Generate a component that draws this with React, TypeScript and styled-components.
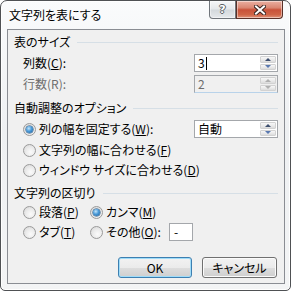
import React from "react";
import styled, { createGlobalStyle } from "styled-components";

const GlobalStyle = createGlobalStyle`
  html, body {
    margin: 0;
    padding: 0;
    background: #ffffff;
  }
  body {
    font-family: "Noto Sans CJK JP", "Noto Sans", sans-serif;
    font-size: 12px;
    color: #000;
  }
`;

const Window = styled.div`
  box-sizing: border-box;
  width: 291px;
  height: 291px;
  border: 1px solid #4f5154;
  border-radius: 7px 7px 5px 5px;
  background: linear-gradient(180deg, #fafbfc 0%, #eef0f2 45%, #f3f4f5 100%);
  box-shadow: inset 0 0 0 1px rgba(255, 255, 255, 0.9);
  display: flex;
  flex-direction: column;
  overflow: hidden;
`;

const TitleBar = styled.div`
  height: 28px;
  display: flex;
  align-items: flex-start;
  padding: 0 7px 0 8px;
`;

const Title = styled.div`
  flex: 1;
  margin-top: 6px;
  line-height: 16px;
  font-feature-settings: "palt";
  text-shadow: 0 0 5px #fff, 0 0 8px #fff;
`;

const CaptionButtons = styled.div`
  display: flex;
`;

const CaptionButton = styled.div<{ $kind: "help" | "close" }>`
  box-sizing: border-box;
  height: 18px;
  width: ${({ $kind }) => ($kind === "help" ? "27px" : "47px")};
  display: flex;
  align-items: center;
  justify-content: center;
  border: 1px solid ${({ $kind }) => ($kind === "help" ? "#70757b" : "#5a3129")};
  border-top: none;
  border-radius: ${({ $kind }) => ($kind === "help" ? "0 0 0 4px" : "0 0 4px 0")};
  background: ${({ $kind }) =>
    $kind === "help"
      ? "linear-gradient(180deg, #f6f7f8 0%, #e4e7ea 48%, #d3d8dc 52%, #e6e9ec 100%)"
      : "linear-gradient(180deg, #eab0a2 0%, #d98672 40%, #c9523a 52%, #cf6446 80%, #e0937a 100%)"};
  box-shadow: inset 0 0 0 1px rgba(255, 255, 255, 0.45);
`;

const HelpGlyph = styled.span`
  font-family: "DejaVu Sans", sans-serif;
  font-weight: bold;
  font-size: 11px;
  line-height: 11px;
  color: #ffffff;
  text-shadow: 1px 0 0 #5b5f64, -1px 0 0 #5b5f64, 0 1px 0 #5b5f64, 0 -1px 0 #5b5f64;
`;

const Client = styled.div`
  box-sizing: border-box;
  height: 255px;
  margin: 0 5px 6px 6px;
  border: 1px solid #8a8d93;
  background: #f0f0f0;
  padding: 5px 6px 0 6px;
  display: flex;
  flex-direction: column;
`;

const Header = styled.div<{ $top: number }>`
  display: flex;
  align-items: center;
  height: 14px;
  line-height: 14px;
  margin-top: ${({ $top }) => $top}px;
`;

const HeaderText = styled.span`
  font-feature-settings: "palt";
`;

const HeaderRule = styled.span`
  flex: 1;
  height: 1px;
  margin-left: 7px;
  background: #d6dfe6;
`;

const Row = styled.div<{ $top?: number; $h?: number }>`
  display: flex;
  align-items: center;
  height: ${({ $h }) => $h ?? 20}px;
  margin-top: ${({ $top }) => $top ?? 0}px;
  padding-left: 9px;
`;

const Label = styled.span<{ $disabled?: boolean; $width?: number }>`
  font-feature-settings: "palt";
  line-height: 16px;
  white-space: nowrap;
  color: ${({ $disabled }) => ($disabled ? "#6d6d6d" : "#000")};
  width: ${({ $width }) => ($width ? `${$width}px` : "auto")};

  & u {
    text-underline-offset: 1px;
  }
`;

const RadioCircle = styled.span`
  box-sizing: border-box;
  flex: none;
  width: 13px;
  height: 13px;
  margin-right: 3px;
  border-radius: 50%;
  border: 1px solid #9a9a9a;
  background: radial-gradient(circle at 60% 65%, #fbfbfb 0%, #ececec 45%, #d4d4d4 100%);
  display: flex;
  align-items: center;
  justify-content: center;
`;

const RadioDot = styled.span`
  width: 7px;
  height: 7px;
  border-radius: 50%;
  background: radial-gradient(circle at 40% 35%, #c4e6fb 0%, #4a9ad8 45%, #1b5c96 100%);
  box-shadow: 0 0 0 0.5px #1c4c78;
`;

const RadioCell = styled.div`
  display: flex;
  align-items: center;
`;

const SpinBox = styled.div<{ $disabled?: boolean }>`
  box-sizing: border-box;
  margin-left: auto;
  width: 84px;
  height: 18px;
  display: flex;
  border: 1px solid #a4a7ab;
  border-bottom-color: ${({ $disabled }) => ($disabled ? "#b9d3ea" : "#a4a7ab")};
  background: ${({ $disabled }) => ($disabled ? "#f0f0f0" : "#ffffff")};
`;

const SpinValue = styled.div<{ $disabled?: boolean }>`
  flex: 1;
  display: flex;
  align-items: center;
  padding-left: 3px;
  line-height: 16px;
  color: ${({ $disabled }) => ($disabled ? "#6d6d6d" : "#000")};
`;

const Caret = styled.span`
  width: 1px;
  height: 13px;
  margin-left: 1px;
  background: #000;
`;

const SpinButtons = styled.div`
  width: 16px;
  display: flex;
  flex-direction: column;
  padding: 1px 1px 1px 0;
  gap: 1px;
`;

const SpinButton = styled.div`
  flex: 1;
  display: flex;
  align-items: center;
  justify-content: center;
  background: linear-gradient(180deg, #f7f7f7 0%, #ebebeb 50%, #dcdcdc 100%);
  border: 1px solid #d2d2d2;
  border-radius: 1px;
`;

const Arrow = styled.span<{ $up?: boolean; $disabled?: boolean }>`
  width: 0;
  height: 0;
  border-left: 3px solid transparent;
  border-right: 3px solid transparent;
  ${({ $up, $disabled }) =>
    $up
      ? `border-bottom: 3px solid ${$disabled ? "#b0b0b0" : "#3e4f6e"};`
      : `border-top: 3px solid ${$disabled ? "#b0b0b0" : "#5a79b0"};`}
`;

const SepGrid = styled.div`
  display: grid;
  grid-template-columns: 67px auto;
  grid-auto-rows: 20px;
  margin-top: 2px;
  padding-left: 9px;
`;

const SmallInput = styled.div`
  box-sizing: border-box;
  width: 24px;
  height: 18px;
  border: 1px solid #a4a7ab;
  background: #fff;
  padding-left: 4px;
  line-height: 15px;
`;

const ButtonRow = styled.div`
  display: flex;
  justify-content: flex-end;
  gap: 10px;
  margin-top: 15px;
  padding-right: 1px;
`;

const Button = styled.div<{ $primary?: boolean }>`
  box-sizing: border-box;
  width: ${({ $primary }) => ($primary ? "74px" : "75px")};
  height: 21px;
  display: flex;
  align-items: center;
  justify-content: center;
  font-feature-settings: "palt";
  border: 1px solid ${({ $primary }) => ($primary ? "#3c7fb1" : "#707070")};
  border-radius: 3px;
  background: linear-gradient(180deg, #f2f2f2 0%, #ebebeb 50%, #dddddd 52%, #cfcfcf 100%);
  box-shadow: inset 0 0 0 1px ${({ $primary }) => ($primary ? "#9fdcf9" : "#fbfbfb")};
`;

const Radio = ({ checked }: { checked?: boolean }) => (
  <RadioCircle>{checked && <RadioDot />}</RadioCircle>
);

const Spin = ({ value, disabled, caret }: { value: string; disabled?: boolean; caret?: boolean }) => (
  <SpinBox $disabled={disabled}>
    <SpinValue $disabled={disabled}>
      {value}
      {caret && <Caret />}
    </SpinValue>
    <SpinButtons>
      <SpinButton>
        <Arrow $up $disabled={disabled} />
      </SpinButton>
      <SpinButton>
        <Arrow $disabled={disabled} />
      </SpinButton>
    </SpinButtons>
  </SpinBox>
);

export default function App() {
  return (
    <>
      <GlobalStyle />
      <Window>
        <TitleBar>
          <Title>文字列を表にする</Title>
          <CaptionButtons>
            <CaptionButton $kind="help">
              <HelpGlyph>?</HelpGlyph>
            </CaptionButton>
            <CaptionButton $kind="close">
              <svg width="12" height="10" viewBox="0 0 12 10">
                <path d="M2 1.5 L10 8.5 M10 1.5 L2 8.5" stroke="#3a2622" strokeWidth="4" strokeLinecap="square" />
                <path d="M2 1.5 L10 8.5 M10 1.5 L2 8.5" stroke="#ffffff" strokeWidth="2" strokeLinecap="square" />
              </svg>
            </CaptionButton>
          </CaptionButtons>
        </TitleBar>
        <Client>
          <Header $top={0}>
            <HeaderText>表のサイズ</HeaderText>
            <HeaderRule />
          </Header>
          <Row $top={5} $h={18}>
            <Label>
              列数(<u>C</u>):
            </Label>
            <Spin value="3" caret />
          </Row>
          <Row $top={3} $h={18}>
            <Label $disabled>行数(R):</Label>
            <Spin value="2" disabled />
          </Row>

          <Header $top={8}>
            <HeaderText>自動調整のオプション</HeaderText>
            <HeaderRule />
          </Header>
          <Row $top={4}>
            <Radio checked />
            <Label>
              列の幅を固定する(<u>W</u>):
            </Label>
            <Spin value="自動" />
          </Row>
          <Row $top={1}>
            <Radio />
            <Label>
              文字列の幅に合わせる(<u>F</u>)
            </Label>
          </Row>
          <Row>
            <Radio />
            <Label>
              ウィンドウ サイズに合わせる(<u>D</u>)
            </Label>
          </Row>

          <Header $top={6}>
            <HeaderText>文字列の区切り</HeaderText>
            <HeaderRule />
          </Header>
          <SepGrid>
            <RadioCell>
              <Radio />
              <Label>
                段落(<u>P</u>)
              </Label>
            </RadioCell>
            <RadioCell>
              <Radio checked />
              <Label>
                カンマ(<u>M</u>)
              </Label>
            </RadioCell>
            <RadioCell>
              <Radio />
              <Label>
                タブ(<u>T</u>)
              </Label>
            </RadioCell>
            <RadioCell>
              <Radio />
              <Label $width={63}>
                その他(<u>O</u>):
              </Label>
              <SmallInput>-</SmallInput>
            </RadioCell>
          </SepGrid>

          <ButtonRow>
            <Button $primary>OK</Button>
            <Button>キャンセル</Button>
          </ButtonRow>
        </Client>
      </Window>
    </>
  );
}
